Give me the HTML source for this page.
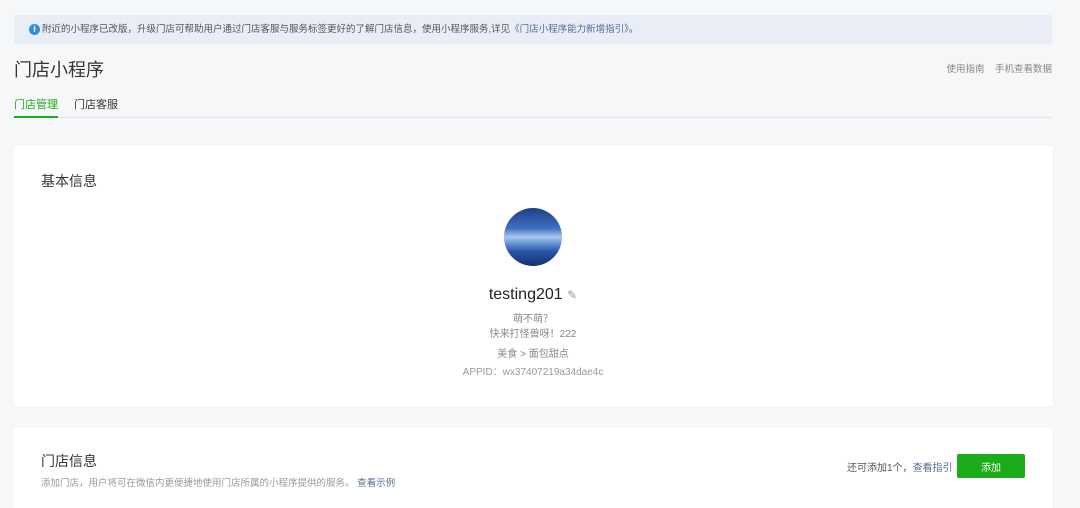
<!DOCTYPE html>
<html><head><meta charset="utf-8"><style>
*{margin:0;padding:0;box-sizing:border-box}
body{width:1080px;height:508px;overflow:hidden;background:#f6f7f9;font-family:"Liberation Sans","Noto Sans CJK SC",sans-serif;color:#353535;position:relative}
.abs{position:absolute}
.banner{left:14px;top:15px;width:1038px;height:29px;background:#e9eef6;font-size:9.5px;color:#555;line-height:29px;padding-left:28px}
.banner .i{position:absolute;left:15px;top:9px;width:11px;height:11px;border-radius:50%;background:#2e8ee6;color:#fff;font-size:9px;line-height:11px;text-align:center;font-weight:bold}
.banner a{color:#576b95}
.title{left:14px;top:56px;font-size:18px;color:#353535}
.links{right:28px;top:61px;font-size:9.5px;color:#888}
.tabs{left:14px;top:96px;font-size:11px}
.line{left:14px;top:117px;width:1038px;height:1px;background:#e4e6e9}
.ul{left:14px;top:116px;width:44px;height:2px;background:#1aad19}
.card{background:#fff;left:14px;width:1038px}
</style></head><body>
<div class="abs banner"><span class="i">i</span>附近的小程序已改版，升级门店可帮助用户通过门店客服与服务标签更好的了解门店信息，使用小程序服务,详见<a>《门店小程序能力新增指引》</a>。</div>
<div class="abs title">门店小程序</div>
<div class="abs links">使用指南&nbsp;&nbsp;&nbsp;&nbsp;手机查看数据</div>
<div class="abs tabs"><span style="color:#1aad19">门店管理</span><span style="margin-left:16px">门店客服</span></div>
<div class="abs line"></div><div class="abs ul"></div>
<div class="abs card" style="top:146px;height:260px">
 <div class="abs" style="left:27px;top:25px;font-size:14px">基本信息</div>
 <div class="abs" style="left:490px;top:62px;width:58px;height:58px;border-radius:50%;overflow:hidden;background:linear-gradient(180deg,#1f3f84 0%,#3f6fc0 35%,#a9c8ee 50%,#6b9ad8 60%,#2a55a8 75%,#142f70 100%)"></div>
 <div class="abs" style="left:0;width:1038px;top:140px;text-align:center;font-size:16px;color:#222">testing201 <span style="color:#999;font-size:12px">✎</span></div>
 <div class="abs" style="left:0;width:1038px;top:166px;text-align:center;font-size:10px;color:#888;line-height:15px">萌不萌？<br>快来打怪兽呀！222</div>
 <div class="abs" style="left:0;width:1038px;top:199px;text-align:center;font-size:10px;color:#888">美食 &gt; 面包甜点</div>
 <div class="abs" style="left:0;width:1038px;top:217px;text-align:center;font-size:10px;color:#999">APPID：wx37407219a34dae4c</div>
</div>
<div class="abs card" style="top:428px;height:80px">
 <div class="abs" style="left:27px;top:23px;font-size:14px">门店信息</div>
 <div class="abs" style="left:27px;top:47px;font-size:9.5px;color:#999">添加门店，用户将可在微信内更便捷地使用门店所属的小程序提供的服务。 <span style="color:#576b95">查看示例</span></div>
 <div class="abs" style="left:833px;top:31px;font-size:10px;color:#555">还可添加1个，<span style="color:#576b95">查看指引</span></div>
 <div class="abs" style="left:943px;top:26px;width:68px;height:24px;background:#1aad19;border-radius:2px;color:#fff;font-size:10px;display:flex;align-items:center;justify-content:center">添加</div>
</div>
</body></html>
